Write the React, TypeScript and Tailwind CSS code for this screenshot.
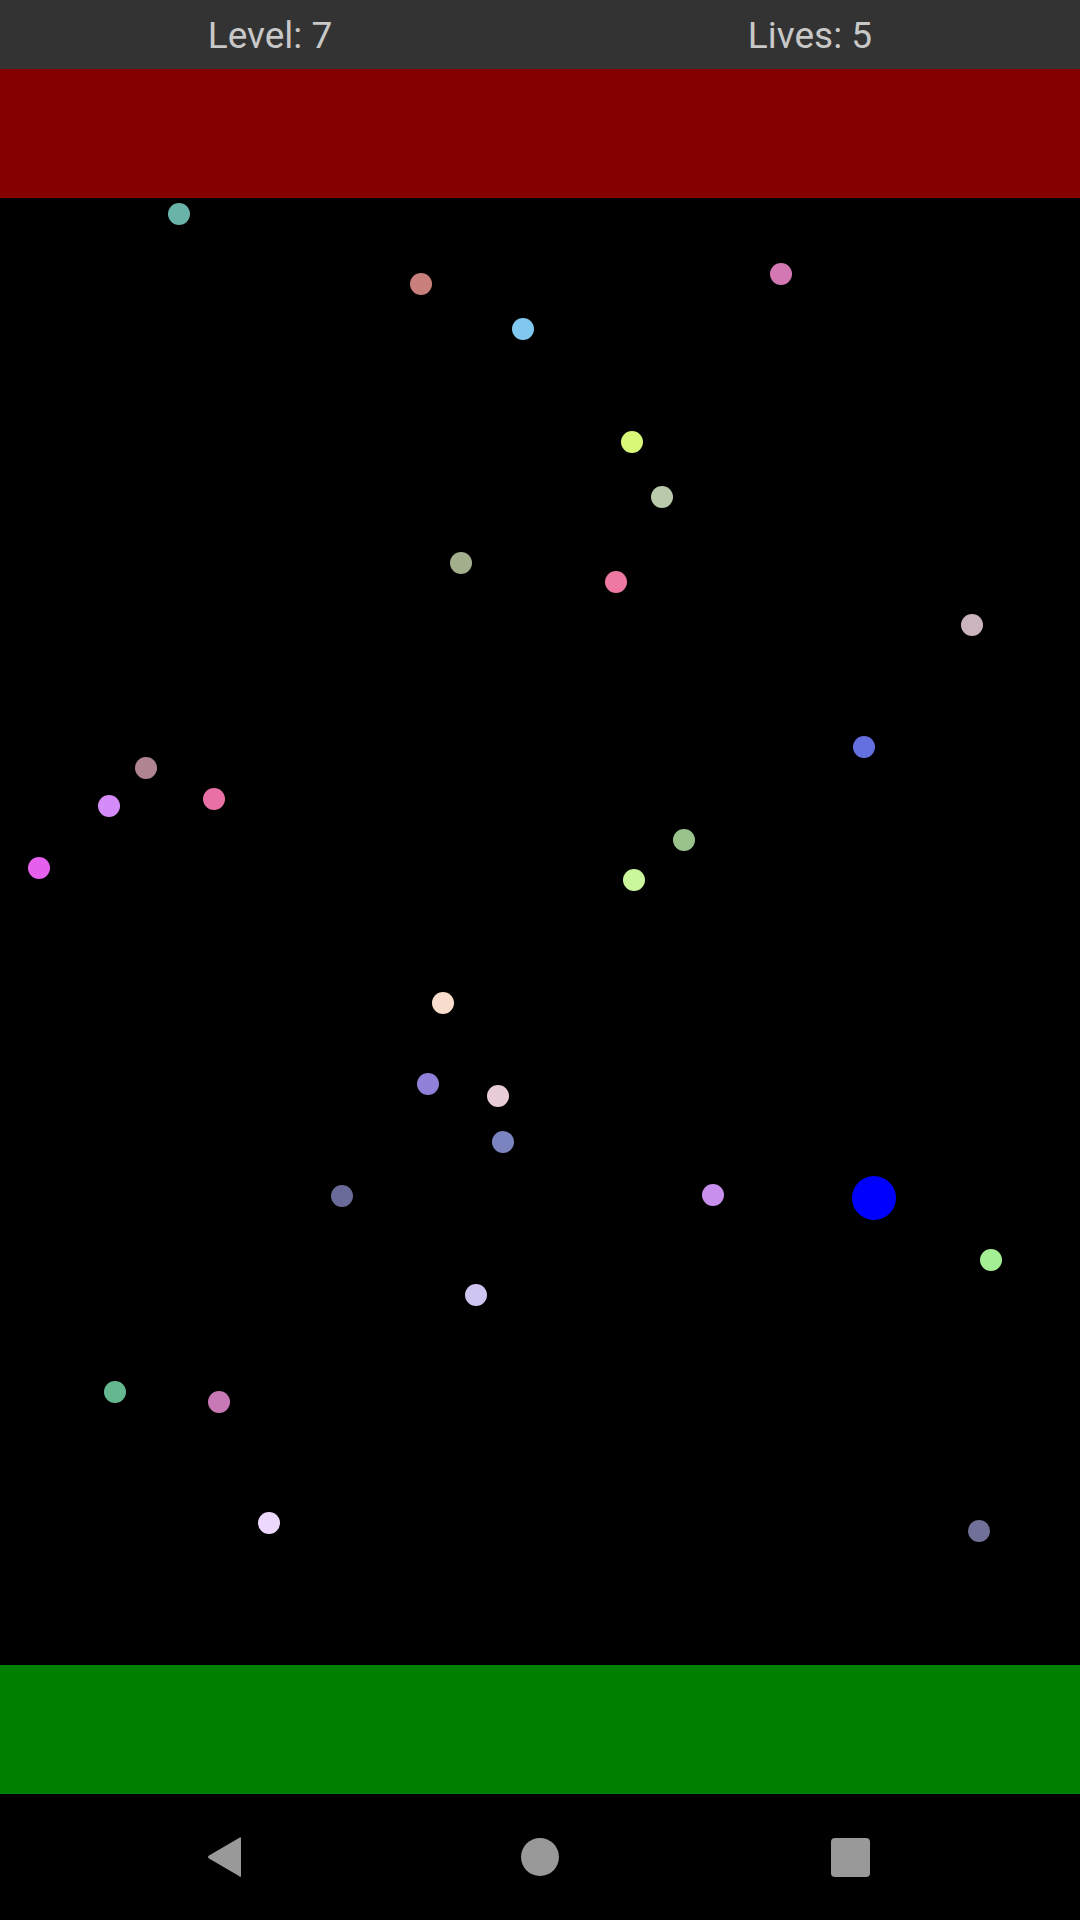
import * as React from "react";

// Ball positions are page coordinates (centre of each dot), measured from the screen.
const FIELD_TOP = 198;

const dots: { x: number; y: number; c: string }[] = [
  { x: 179, y: 214, c: "#6ab3a8" },
  { x: 421, y: 284, c: "#c97f7b" },
  { x: 523, y: 329, c: "#80c8f0" },
  { x: 781, y: 274, c: "#d478b4" },
  { x: 632, y: 442, c: "#d8f878" },
  { x: 662, y: 497, c: "#b8caaa" },
  { x: 461, y: 563, c: "#a2ae8c" },
  { x: 616, y: 582, c: "#ee7aa4" },
  { x: 972, y: 625, c: "#ccb4bf" },
  { x: 864, y: 747, c: "#6470e0" },
  { x: 146, y: 768, c: "#b08490" },
  { x: 109, y: 806, c: "#d48cf8" },
  { x: 214, y: 799, c: "#e870a4" },
  { x: 39, y: 868, c: "#e660ee" },
  { x: 684, y: 840, c: "#98c48c" },
  { x: 634, y: 880, c: "#caf69c" },
  { x: 443, y: 1003, c: "#f8dccc" },
  { x: 428, y: 1084, c: "#9080d8" },
  { x: 498, y: 1096, c: "#e8ccd8" },
  { x: 503, y: 1142, c: "#7c84c0" },
  { x: 342, y: 1196, c: "#6a6a98" },
  { x: 713, y: 1195, c: "#c890ec" },
  { x: 991, y: 1260, c: "#a4ee94" },
  { x: 476, y: 1295, c: "#d0c4f0" },
  { x: 115, y: 1392, c: "#64b890" },
  { x: 219, y: 1402, c: "#c878b4" },
  { x: 269, y: 1523, c: "#ecd8fc" },
  { x: 979, y: 1531, c: "#707098" },
];

const player = { x: 874, y: 1198 };

export default function App() {
  return (
    <div
      className="w-[1080px] h-[1920px] flex flex-col bg-black overflow-hidden"
      style={{ fontFamily: "Roboto, 'Liberation Sans', sans-serif" }}
    >
      {/* ── Score bar ── */}
      <header className="h-[69px] shrink-0 flex bg-[#333333] text-[#c8c8c8] text-[37px] leading-none">
        <div className="flex-1 flex items-center justify-center pt-[2px]">Level: 7</div>
        <div className="flex-1 flex items-center justify-center pt-[2px]">Lives: 5</div>
      </header>

      {/* ── Danger zone ── */}
      <div className="h-[129px] shrink-0 bg-[#850000]" />

      {/* ── Play field ── */}
      <main className="relative flex-1 bg-black">
        {dots.map((d, i) => (
          <span
            key={i}
            className="absolute w-[22px] h-[22px] -ml-[11px] -mt-[11px] rounded-full"
            style={{ left: d.x, top: d.y - FIELD_TOP, backgroundColor: d.c }}
          />
        ))}
        <span
          className="absolute w-[44px] h-[44px] -ml-[22px] -mt-[22px] rounded-full bg-[#0000ff]"
          style={{ left: player.x, top: player.y - FIELD_TOP }}
        />
      </main>

      {/* ── Goal zone ── */}
      <div className="h-[129px] shrink-0 bg-[#008000]" />

      {/* ── Android nav bar ── */}
      <nav className="h-[126px] shrink-0 bg-black flex items-center pl-[206px]">
        <BackIcon />
        <div className="ml-[277px] w-[38px] h-[38px] rounded-full bg-[#999999]" />
        <div className="ml-[272px] w-[39px] h-[39px] rounded-[4px] bg-[#999999]" />
      </nav>
    </div>
  );
}

function BackIcon() {
  return (
    <svg width="38" height="44" viewBox="0 0 38 44" aria-hidden="true">
      <path
        d="M35 3.5 L35 40.5 Q35 43 33 41 L3 23.5 Q1 22 3 20.5 L33 3 Q35 1.5 35 3.5 Z"
        fill="#999999"
      />
    </svg>
  );
}
